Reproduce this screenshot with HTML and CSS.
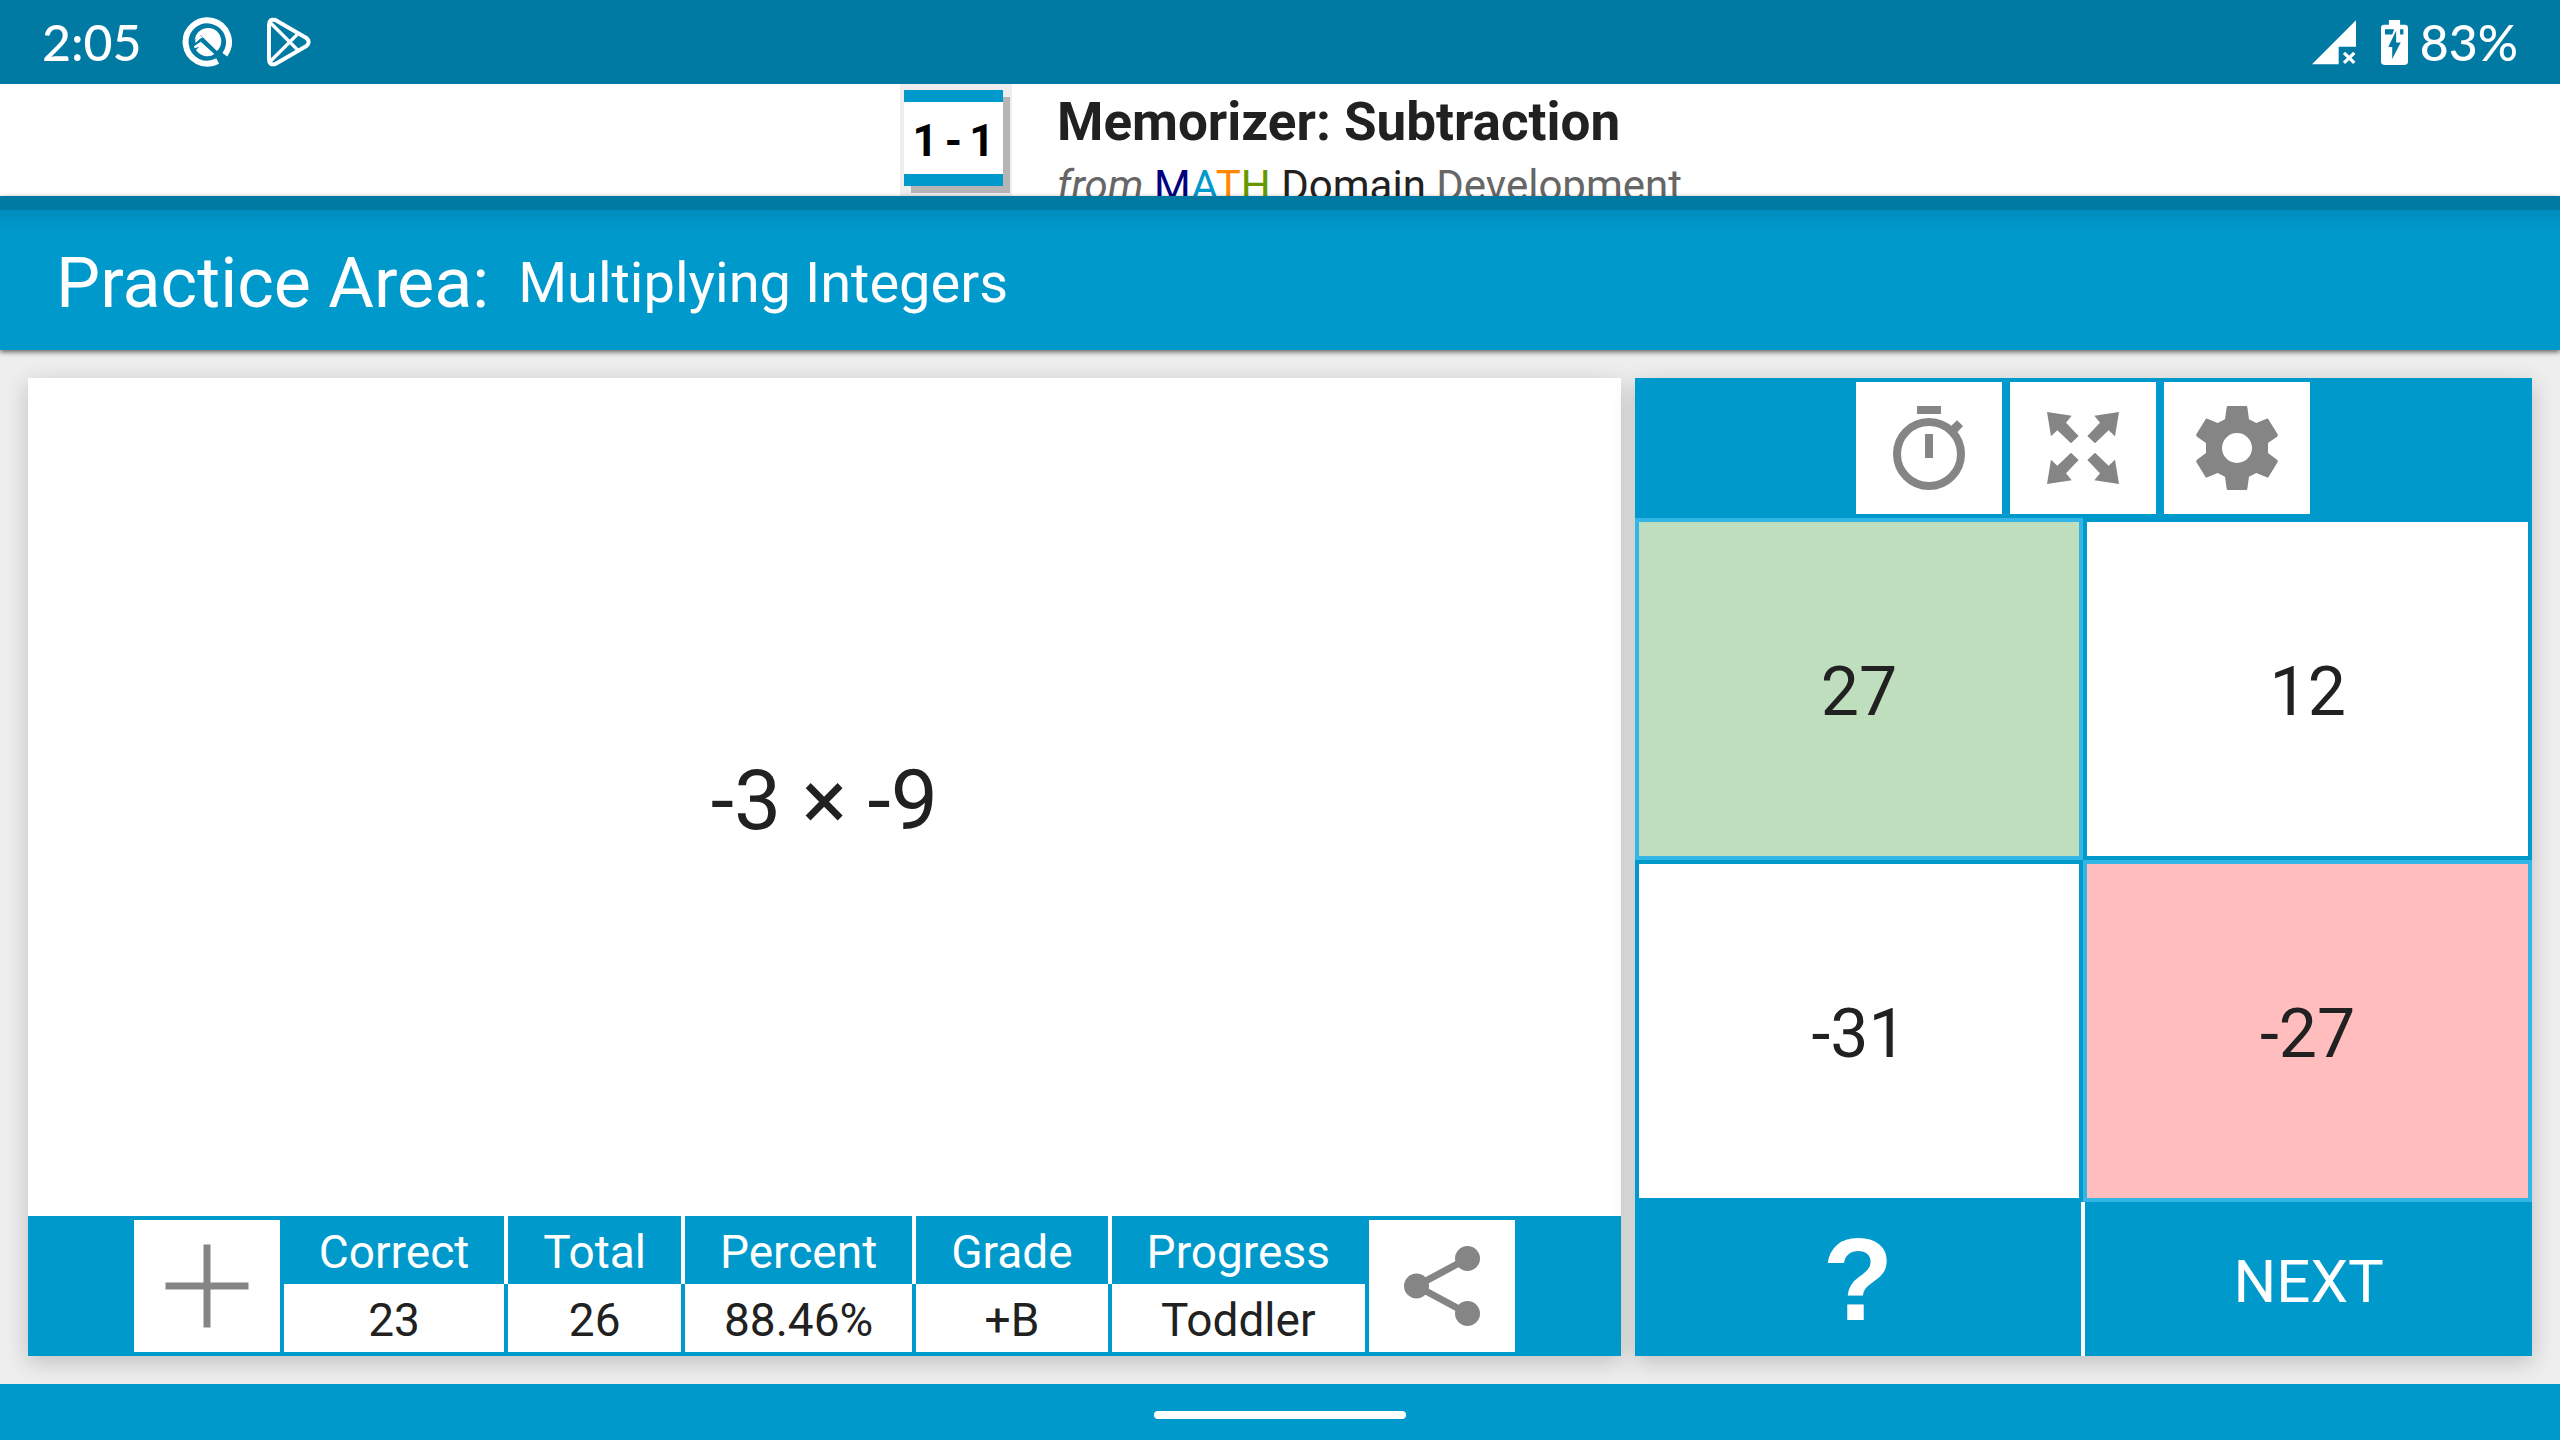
FILE: index.html
```html
<!DOCTYPE html>
<html lang="en">
<head>
<meta charset="utf-8">
<meta name="viewport" content="width=device-width, initial-scale=1">
<title>Practice Area: Multiplying Integers</title>
<link rel="stylesheet" href="styles.css">
</head>
<body>
<div class="status-bar">
  <div class="status-group status-left">
    <span class="status-text">2:05</span>
    <svg class="status-icon" viewBox="0 0 150 150" aria-hidden="true">
      <path d="M128.500 113A65 65 0 1 0 107 132" fill="none" stroke="#fff" stroke-width="18"/>
      <path d="M38 70A40 40 0 1 1 104 103L56 57L42 76Z" fill="#fff"/>
      <path d="M36 88L56 74L98 111A40 40 0 0 1 42 99L52 89L38 94Z" fill="#fff"/>
      <path d="M34 80L56 63L128 133" fill="none" stroke="#007aa3" stroke-width="12"/>
      <path d="M40 70Q46 58 56 56L62 62L56 64L40 78Z" fill="#fff"/>
    </svg>
    <svg class="status-icon play-icon" viewBox="0 0 150 150" aria-hidden="true" fill="none" stroke="#fff" stroke-width="12" stroke-linejoin="round">
      <path d="M15 24Q15 4 34 9L126 62Q142 75 126 88L34 141Q15 146 15 126Z"/>
      <path d="M20 18L106 104M20 132L106 46" stroke-width="10"/>
    </svg>
  </div>
  <div class="status-group status-right">
    <svg class="signal-icon" viewBox="0 0 132 134" aria-hidden="true">
      <path d="M132 0V80H80V132H0Z" fill="#fff"/>
      <path d="M96 98L127 128M127 98L96 128" stroke="#fff" stroke-width="10"/>
    </svg>
    <svg class="battery-icon" viewBox="0 0 82 136" aria-hidden="true">
      <path d="M24 0H58V14H72Q82 14 82 24V126Q82 136 72 136H10Q0 136 0 126V24Q0 14 10 14H24Z" fill="#fff"/>
      <path d="M12 28H40L34 44H12ZM58 28H68V44H58ZM46 32V68H60L34 118V82H22Z" fill="#007aa3"/>
    </svg>
    <span class="status-text">83%</span>
  </div>
</div>

<a class="banner" href="#">
  <span class="banner-icon">
    <span class="flash-card"><span>1</span><span>-</span><span>1</span></span>
  </span>
  <span class="banner-copy">
    <strong class="banner-title">Memorizer: Subtraction</strong>
    <span class="banner-sub"><em>from</em> <span class="m">M</span><span class="a">A</span><span class="t">T</span><span class="h">H</span> <span class="domain">Domain</span> Development</span>
  </span>
</a>

<header class="app-bar">
  <h1>Practice Area:</h1>
  <h2>Multiplying Integers</h2>
</header>

<main class="practice">
  <section class="card question-card">
    <p class="question">-3 × -9</p>
    <div class="score-bar">
      <button class="icon-button" type="button" aria-label="Add">
        <svg viewBox="0 0 146 132"><path d="M73 24.500V107.500M31.500 66H114.500" stroke="#858585" stroke-width="7"/></svg>
      </button>
      <table class="score">
        <thead><tr><th>Correct</th><th>Total</th><th>Percent</th><th>Grade</th><th>Progress</th></tr></thead>
        <tbody><tr><td>23</td><td>26</td><td>88.46%</td><td>+B</td><td>Toddler</td></tr></tbody>
      </table>
      <button class="icon-button" type="button" aria-label="Share">
        <svg viewBox="0 0 146 132" fill="#858585"><path d="M98.500 38.500L47.500 66L98.500 93.500" fill="none" stroke="#858585" stroke-width="7"/><circle cx="98.500" cy="38.500" r="12.500"/><circle cx="47.500" cy="66" r="12.500"/><circle cx="98.500" cy="93.500" r="12.500"/></svg>
      </button>
    </div>
  </section>

  <section class="card answer-card">
    <div class="tool-bar">
      <button class="icon-button" type="button" aria-label="Timer">
        <svg viewBox="48 36 438 396" fill="#858585"><path d="M231 108H303V132H231ZM255 192H279V264H255ZM333 168L351 151L369 168L352 187Z"/><circle cx="267" cy="252" r="96" fill="none" stroke="#858585" stroke-width="24"/></svg>
      </button>
      <button class="icon-button" type="button" aria-label="Full screen">
        <svg viewBox="510 36 438 396" fill="#858585">
          <path d="M621 126L695 137L678 158L716 198L693 220L652 181L633 199Z"/>
          <path d="M837 126L763 137L780 158L742 198L765 220L806 181L825 199Z"/>
          <path d="M621 342L695 331L678 310L716 270L693 248L652 287L633 269Z"/>
          <path d="M837 342L763 331L780 310L742 270L765 248L806 287L825 269Z"/>
        </svg>
      </button>
      <button class="icon-button" type="button" aria-label="Settings">
        <svg viewBox="972 36 438 396"><path fill="#858585" fill-rule="evenodd" d="M1163 108H1219Q1221 108 1222 112L1227 148L1249 159L1280 146Q1284 145 1286 149L1313 193Q1315 197 1311 200L1284 219V249L1311 269Q1315 272 1313 276L1286 320Q1284 324 1280 322L1249 309L1227 320L1222 356Q1221 360 1219 360H1163Q1161 360 1160 356L1155 320L1133 309L1102 322Q1098 324 1096 320L1069 276Q1067 272 1071 269L1098 249V219L1071 200Q1067 197 1069 193L1096 149Q1098 145 1102 146L1133 159L1155 148L1160 112Q1161 108 1163 108ZM1191 189A45 45 0 1 0 1191 279A45 45 0 1 0 1191 189Z"/></svg>
      </button>
    </div>
    <div class="answers">
      <button class="answer right" type="button">27</button>
      <button class="answer" type="button">12</button>
      <button class="answer" type="button">-31</button>
      <button class="answer wrong" type="button">-27</button>
    </div>
    <div class="actions">
      <button class="action help" type="button" aria-label="Help">?</button>
      <button class="action" type="button">NEXT</button>
    </div>
  </section>
</main>

<nav class="nav-bar"><span class="nav-handle"></span></nav>
</body>
</html>
```
FILE: styles.css
```css
:root {
  --blue: #0099cc;
  --blue-dark: #007aa3;
  --blue-light: #33b5e5;
  --ink: #212121;
}

* { box-sizing: border-box; }

body {
  margin: 0;
  min-height: 100vh;
  display: flex;
  flex-direction: column;
  background: #eee;
  color: var(--ink);
  font-family: Roboto, "Liberation Sans", sans-serif;
}

h1, h2, p { margin: 0; font-weight: 400; }

button {
  margin: 0;
  padding: 0;
  border: 0;
  font: inherit;
  color: inherit;
  cursor: pointer;
}

/* Status bar */
.status-bar {
  display: flex;
  justify-content: space-between;
  align-items: center;
  height: 84px;
  padding: 0 42px;
  background: var(--blue-dark);
  color: #fff;
}
.status-group { display: flex; align-items: center; }
.status-left { gap: 40px; }
.status-right { gap: 12px; }
.status-text {
  font-family: Lato, "Open Sans", sans-serif;
  font-size: 50px;
  font-weight: 500;
  line-height: 84px;
}
.status-icon { width: 50px; height: 50px; }
.play-icon { margin-left: -8px; }
.signal-icon { width: 44px; height: 45px; margin-right: 13px; }
.battery-icon { width: 27px; height: 45px; }

/* Promotional banner */
.banner {
  display: flex;
  justify-content: center;
  gap: 45px;
  height: 112px;
  overflow: hidden;
  padding-left: 22px;
  background: #fff;
  color: #666;
  text-decoration: none;
}
.banner-icon {
  width: 112px;
  height: 112px;
  padding: 6px 4px;
  background: #eee;
}
.flash-card {
  display: flex;
  justify-content: center;
  align-items: center;
  gap: 7px;
  width: 99px;
  height: 96px;
  padding-top: 6px;
  border: solid var(--blue);
  border-width: 12px 0;
  background: #fff;
  box-shadow: 7px 7px 0 #b5b5b5;
  color: #000;
  font-size: 44px;
  font-weight: 700;
}
.banner-copy { display: flex; flex-direction: column; }
.banner-title { color: var(--ink); font-size: 53px; line-height: 76px; }
.banner-sub { font-size: 42px; line-height: 52px; }
.m { color: #000080; }
.a { color: #0099cc; }
.t { color: #ff8800; }
.h { color: #669900; }
.domain { color: var(--ink); }

/* App bar */
.app-bar {
  display: flex;
  align-items: center;
  gap: 29px;
  position: relative;
  height: 154px;
  padding: 6px 56px 0;
  border-top: 14px solid var(--blue-dark);
  background: linear-gradient(#008dbc, var(--blue) 20px);
  box-shadow: 0 2px 5px rgba(0, 0, 0, 0.6);
  color: #fff;
}
h1 { font-size: 70px; line-height: 84px; }
h2 { font-size: 56px; line-height: 68px; }

/* Practice area */
.practice { flex: 1; display: flex; gap: 14px; padding: 28px; }
.card {
  display: flex;
  flex-direction: column;
  min-width: 0;
  box-shadow: 0 6px 22px rgba(0, 0, 0, 0.2);
}
.question-card { flex: 71 1 0; background: #fff; }
.answer-card { flex: 40 1 0; background: var(--blue); }

.question {
  flex: 1;
  display: flex;
  justify-content: center;
  align-items: center;
  padding-top: 6px;
  font-size: 84px;
}

.score-bar, .tool-bar {
  display: flex;
  justify-content: center;
  height: 140px;
  background: var(--blue);
}
.score-bar { gap: 4px; }
.tool-bar { gap: 8px; }
.icon-button { width: 146px; height: 132px; margin: 4px 0; background: #fff; }
.icon-button svg { display: block; width: 100%; height: 100%; }

.score { border-spacing: 0; height: 136px; font-size: 46px; line-height: 64px; text-align: center; }
.score th, .score td { height: 68px; padding: 4px 35px 0; font-weight: 400; }
.score th { border-right: 4px solid #fff; color: #fff; }
.score td { border-right: 4px solid var(--blue); background: #fff; }
.score th:last-child, .score td:last-child { border-right: 0; }

.answers { flex: 1; display: grid; grid-template: 1fr 1fr / 1fr 1fr; }
.answer { padding-top: 6px; border: 4px solid var(--blue); background: #fff; font-size: 68px; }
.answer.right { border-color: var(--blue-light); background: #bfdebd; }
.answer.wrong { border-color: var(--blue-light); background: #ffbdbd; }

.actions { display: flex; gap: 4px; height: 154px; background: #fff; }
.action { flex: 1 1 0; padding-top: 4px; background: var(--blue); color: #fff; font-size: 60px; }
.help { padding-top: 2px; font-family: "Liberation Sans", sans-serif; font-size: 116px; font-weight: 700; line-height: 150px; }

/* System navigation */
.nav-bar {
  display: flex;
  justify-content: center;
  align-items: center;
  height: 56px;
  background: var(--blue);
}
.nav-handle { width: 252px; height: 8px; margin-top: 6px; border-radius: 4px; background: #fff; }
```
